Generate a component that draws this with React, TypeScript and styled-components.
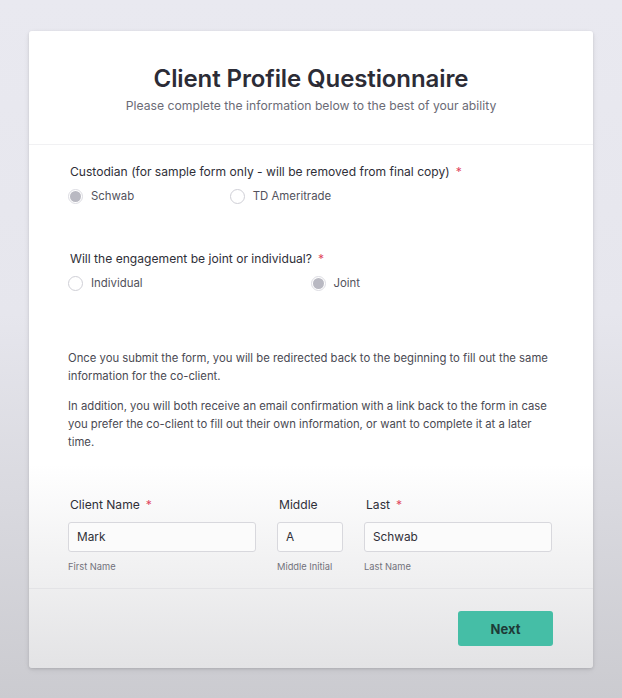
import React from 'react';
import styled, { createGlobalStyle } from 'styled-components';

const GlobalStyle = createGlobalStyle`
  html, body {
    margin: 0;
    padding: 0;
  }
  body {
    font-family: Inter, "Noto Sans", sans-serif;
    background: linear-gradient(180deg, #e9e9f0 0%, #e6e6ed 45%, #cbcbd0 100%);
    min-height: 698px;
  }
`;

const Page = styled.div`
  width: 622px;
  min-height: 698px;
  box-sizing: border-box;
  padding: 31px 29px 30px 29px;
`;

const Card = styled.div`
  width: 564px;
  box-sizing: border-box;
  background: linear-gradient(180deg, #ffffff 0%, #ffffff 68%, #e3e3e5 100%);
  border-radius: 3px;
  box-shadow: 0 1px 3px rgba(0, 0, 0, 0.12), 0 2px 6px rgba(0, 0, 0, 0.06);
`;

const Header = styled.header`
  display: flex;
  flex-direction: column;
  align-items: center;
  padding: 33px 40px 29px;
  border-bottom: 1px solid #f1f1f3;
`;

const Title = styled.h1`
  margin: 0;
  font-size: 24px;
  font-weight: 600;
  color: #2c2c36;
  letter-spacing: -0.1px;
  line-height: 30px;
`;

const Subtitle = styled.p`
  margin: 3px 0 0;
  font-size: 12.2px;
  color: #6b6b76;
  line-height: 18px;
`;

const Body = styled.div`
  padding: 18px 40px 14px 39px;
  display: flex;
  flex-direction: column;
`;

const Question = styled.div<{ $gap?: number }>`
  display: flex;
  flex-direction: column;
  gap: 6px;
  margin-bottom: ${(p) => p.$gap ?? 0}px;
`;

const Label = styled.label`
  font-size: 12.1px;
  color: #2f2f38;
  line-height: 18px;
  padding-left: 2px;
`;

const Required = styled.span`
  color: #e0435c;
  margin-left: 6px;
`;

const Options = styled.div<{ $cols: number }>`
  display: grid;
  grid-template-columns: repeat(${(p) => p.$cols}, 1fr);
`;

const Option = styled.div`
  display: flex;
  align-items: center;
  gap: 8px;
  font-size: 11.4px;
  color: #52525c;
  line-height: 18px;
`;

const Radio = styled.span<{ $checked?: boolean }>`
  width: 15px;
  height: 15px;
  box-sizing: border-box;
  border-radius: 50%;
  border: 1px solid ${(p) => (p.$checked ? '#dcdce2' : '#cfcfd6')};
  background: #fff;
  display: flex;
  align-items: center;
  justify-content: center;
  &::after {
    content: '';
    display: ${(p) => (p.$checked ? 'block' : 'none')};
    width: 11px;
    height: 11px;
    border-radius: 50%;
    background: #b9b9c2;
  }
`;

const Info = styled.div`
  margin-top: 57px;
  display: flex;
  flex-direction: column;
  gap: 12px;
  font-size: 11.3px;
  color: #4a4a53;
  line-height: 18px;
`;

const Para = styled.p`
  margin: 0;
`;

const NameRow = styled.div`
  margin-top: 45px;
  display: grid;
  grid-template-columns: 188px 66px 188px;
  column-gap: 21px;
`;

const Field = styled.div`
  display: flex;
  flex-direction: column;
`;

const FieldLabel = styled.div`
  font-size: 12.1px;
  color: #2f2f38;
  line-height: 18px;
  padding-left: 2px;
  margin-bottom: 8px;
`;

const Input = styled.div`
  height: 30px;
  box-sizing: border-box;
  border: 1px solid #d8d8dd;
  border-radius: 3px;
  background: #fbfbfb;
  padding: 0 8px;
  display: flex;
  align-items: center;
  font-size: 11.8px;
  color: #303038;
`;

const Hint = styled.div`
  margin-top: 8px;
  font-size: 9.3px;
  color: #72727b;
  line-height: 14px;
`;

const Footer = styled.footer`
  border-top: 1px solid #e3e3e6;
  padding: 22px 40px 22px;
  display: flex;
  justify-content: flex-end;
`;

const NextButton = styled.button`
  width: 95px;
  height: 35px;
  border: none;
  border-radius: 3px;
  background: #45bea6;
  color: #1e3b37;
  font-family: Inter, "Noto Sans", sans-serif;
  font-size: 13px;
  font-weight: 700;
  cursor: pointer;
`;

export default function App() {
  return (
    <>
      <GlobalStyle />
      <Page>
        <Card>
          <Header>
            <Title>Client Profile Questionnaire</Title>
            <Subtitle>Please complete the information below to the best of your ability</Subtitle>
          </Header>
          <Body>
            <Question $gap={45}>
              <Label>
                Custodian (for sample form only - will be removed from final copy)
                <Required>*</Required>
              </Label>
              <Options $cols={3}>
                <Option>
                  <Radio $checked /> Schwab
                </Option>
                <Option>
                  <Radio /> TD Ameritrade
                </Option>
              </Options>
            </Question>
            <Question>
              <Label>
                Will the engagement be joint or individual?
                <Required>*</Required>
              </Label>
              <Options $cols={2}>
                <Option>
                  <Radio /> Individual
                </Option>
                <Option>
                  <Radio $checked /> Joint
                </Option>
              </Options>
            </Question>
            <Info>
              <Para>
                Once you submit the form, you will be redirected back to the beginning to fill out the same
                information for the co-client.
              </Para>
              <Para>
                In addition, you will both receive an email confirmation with a link back to the form in case
                you prefer the co-client to fill out their own information, or want to complete it at a later
                time.
              </Para>
            </Info>
            <NameRow>
              <Field>
                <FieldLabel>
                  Client Name<Required>*</Required>
                </FieldLabel>
                <Input>Mark</Input>
                <Hint>First Name</Hint>
              </Field>
              <Field>
                <FieldLabel>Middle</FieldLabel>
                <Input>A</Input>
                <Hint>Middle Initial</Hint>
              </Field>
              <Field>
                <FieldLabel>
                  Last<Required>*</Required>
                </FieldLabel>
                <Input>Schwab</Input>
                <Hint>Last Name</Hint>
              </Field>
            </NameRow>
          </Body>
          <Footer>
            <NextButton>Next</NextButton>
          </Footer>
        </Card>
      </Page>
    </>
  );
}
